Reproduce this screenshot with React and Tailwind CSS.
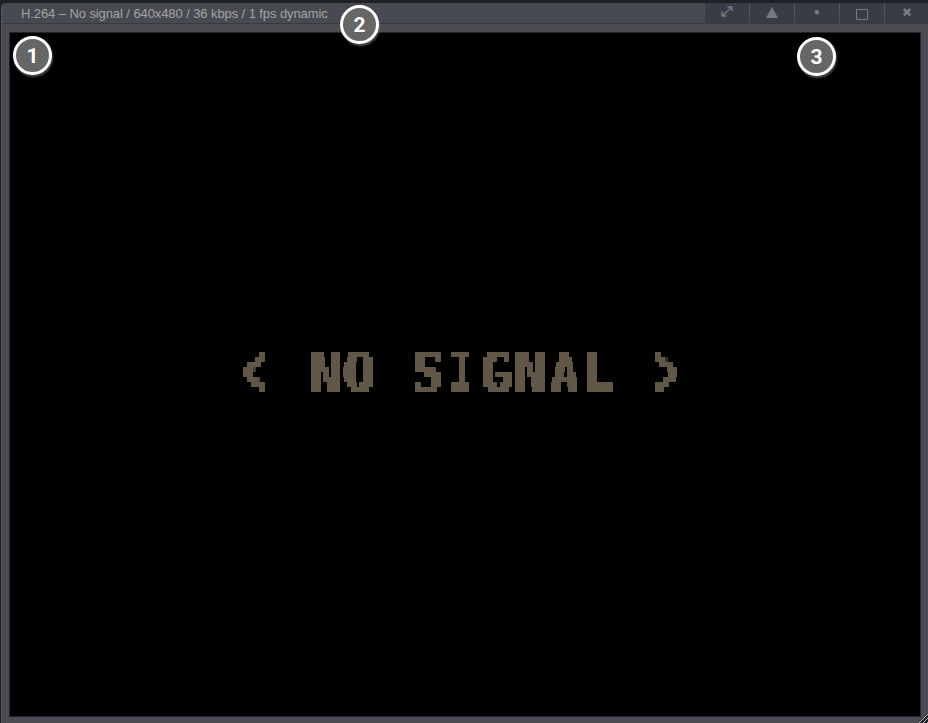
import React from 'react';

function Badge({ children, className }) {
  return (
    <div
      className={`absolute flex h-[39px] w-[39px] items-center justify-center rounded-full border-[3px] border-white bg-[#666666] pt-px font-[Roboto,sans-serif] text-[21px] leading-none font-bold text-white shadow-[1px_2px_2px_rgba(110,110,110,0.7)] ${className}`}
    >
      {children}
    </div>
  );
}

function Button({ label, children }) {
  return (
    <button aria-label={label} className="h-full w-[45px] border-r border-[#50535b] bg-[#393c45] last:w-[43px] last:border-r-0">
      <svg width="43" height="20" viewBox="0 0 43 20" fill="none" stroke="#747b88">
        {children}
      </svg>
    </button>
  );
}

function NoSignal() {
  return (
    <div className="flex h-full items-center justify-center">
      <svg className="absolute h-0 w-0" aria-hidden="true">
        <filter id="pixels" filterUnits="userSpaceOnUse" primitiveUnits="userSpaceOnUse" x="0" y="0" width="520" height="60" colorInterpolationFilters="sRGB">
          <feFlood x="2" y="2" width="1" height="1" floodColor="#fff" result="point" />
          <feOffset in="point" dx="0" dy="0" x="0" y="0" width="5" height="5" result="cell" />
          <feTile in="cell" result="grid" />
          <feComposite in="SourceGraphic" in2="grid" operator="in" />
          <feMorphology operator="dilate" radius="2" />
          <feComponentTransfer>
            <feFuncA type="linear" slope="20" intercept="-9" />
          </feComponentTransfer>
        </filter>
      </svg>
      <div className="relative -top-[3px] -left-[3px] h-[60px] w-[444px]">
        <div className="h-[60px] w-[520px] origin-left [filter:url(#pixels)] scale-x-[0.855]">
          <div className="w-[445px] origin-left scale-x-[1.17] font-['DejaVu_Sans_Mono',monospace] text-[55px] leading-[60px] font-bold tracking-[1.09px] whitespace-pre text-[#605746]">
            <span className="inline-block origin-[25%_58%] scale-x-[0.64] scale-y-[1.4]">{'<'}</span>
            {' NO S'}
            <span className="inline-block origin-[44%_50%] scale-x-[0.68]">I</span>
            {'GN'}
            <span className="inline-block origin-[45%_50%] scale-x-[0.82]">A</span>
            {'L '}
            <span className="inline-block origin-[52%_58%] scale-x-[0.68] scale-y-[1.4]">{'>'}</span>
          </div>
        </div>
      </div>
    </div>
  );
}

export default function App() {
  return (
    <div className="relative h-[723px] w-[928px] overflow-hidden bg-[#202124] pt-[3px] pl-px font-['Liberation_Sans',Arial,sans-serif]">
      <div className="flex h-[720px] flex-col rounded-tl-[5px] border-l border-[#555861] bg-[#4a4c52]">
        <div className="flex h-[21px] shrink-0 overflow-hidden rounded-tl-[5px] border-b border-[#373a43] bg-[#484a51]">
          <div className="w-[703px] shrink-0 pl-[19px] text-[13px] leading-[21px] tracking-[-0.09px] text-[#a4a4a4]">
            <span className="inline-block whitespace-nowrap">H.264 – No signal / 640x480 / 36 kbps / 1 fps dynamic</span>
          </div>
          <Button label="Full screen">
            <path d="m17.5 12.5 9-8M22.5 4h4.5v4.5M17 8.5V13h4.5" strokeWidth="1.3" />
          </Button>
          <Button label="Keep above"><path d="m22 4 6 11H16Z" fill="#747b88" stroke="none" /></Button>
          <Button label="Original size"><circle cx="22" cy="9.2" r="2.2" fill="#747b88" stroke="none" /></Button>
          <Button label="Maximize"><path d="M16.5 6.5h11v10h-11Z" /></Button>
          <Button label="Close"><path d="m18.8 6 6.4 6.4m0-6.4-6.4 6.4" strokeWidth="2.5" /></Button>
        </div>
        <div className="mt-[8px] mr-[7px] mb-[6px] ml-[7px] min-h-0 flex-1 border border-[#25262a] bg-black">
          <NoSignal />
        </div>
      </div>
      <svg className="absolute right-0 bottom-0" width="10" height="10" fill="none">
        <path d="M0 10 10 0V10Z" fill="#222" />
        <path d="m1 10 9-9M5 10l5-5M9 10l1-1" stroke="#b5b5b5" strokeWidth="1" />
      </svg>
      <Badge className="top-[36px] left-[13px]">1</Badge>
      <Badge className="top-[5px] left-[340px]">2</Badge>
      <Badge className="top-[37px] left-[797px]">3</Badge>
    </div>
  );
}
